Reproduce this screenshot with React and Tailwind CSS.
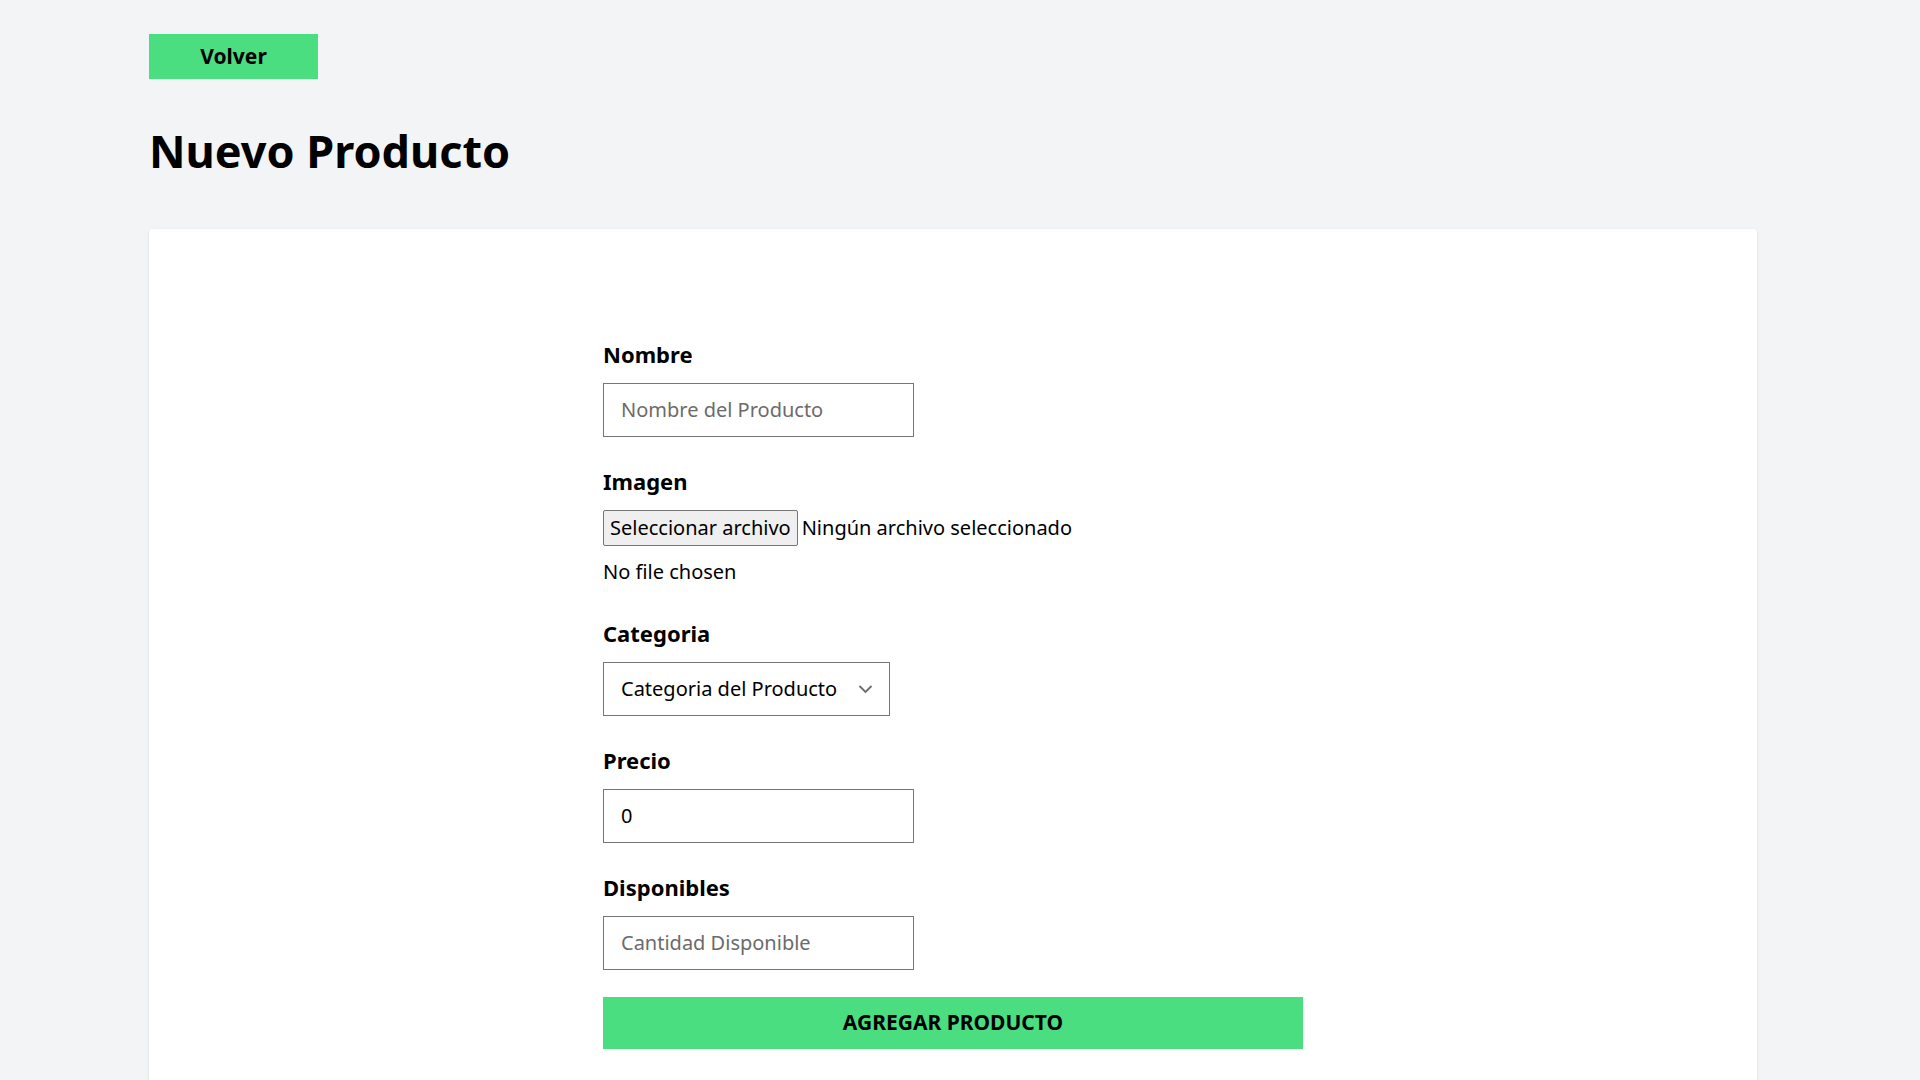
import React, { useState } from 'react';

const Field = ({ label, className = 'mb-[29px]', children }) => (
  <div className={className}>
    <label className="block text-[22px] font-bold leading-[30px] mb-[14px]">{label}</label>
    {children}
  </div>
);

const NuevoProducto = () => {
  const [nombre, setNombre] = useState('');
  const [categoria, setCategoria] = useState('');
  const [precio, setPrecio] = useState(0);
  const [disponibles, setDisponibles] = useState('');

  const inputClass = "w-[311px] h-[54px] border border-[#767676] bg-white px-[17px] text-[20px] text-black placeholder:text-[#6b6b6b] outline-none";

  return (
    <div className="h-screen overflow-y-scroll bg-[#f3f4f6] text-black font-['Noto_Sans',_'Open_Sans',_sans-serif]">
      <div className="w-[1608px] ml-[149px] pt-[34px] pb-[100px]">
        <button className="w-[169px] h-[45px] bg-[#4ade80] text-[21px] font-bold">Volver</button>

        <h1 className="mt-[41.5px] text-[45px] font-bold leading-[60px]">Nuevo Producto</h1>

        <div className="mt-[48.5px] bg-white rounded-sm shadow-sm pt-[109.5px] pb-[90px]">
          <form className="w-[700px] mx-auto" onSubmit={(e) => e.preventDefault()}>
            <Field label="Nombre">
              <input
                type="text"
                value={nombre}
                onChange={(e) => setNombre(e.target.value)}
                placeholder="Nombre del Producto"
                className={inputClass}
              />
            </Field>

            <Field label="Imagen" className="mb-[32px]">
              <label className="flex items-center text-[20px] leading-[28px] cursor-pointer mt-[1.5px]">
                <span className="h-[36px] px-[6px] flex items-center bg-[#efefef] border border-[#767676] rounded-[2px]">Seleccionar archivo</span>
                <span className="ml-[4px]">Ningún archivo seleccionado</span>
                <input type="file" className="hidden" />
              </label>
              <p className="mt-[12px] text-[20px] leading-[28px]">No file chosen</p>
            </Field>

            <Field label="Categoria">
              <div className="relative w-[287px]">
                <select
                  value={categoria}
                  onChange={(e) => setCategoria(e.target.value)}
                  className="appearance-none w-full h-[54px] border border-[#767676] bg-white pl-[17px] pr-[40px] text-[20px] text-black outline-none"
                >
                  <option value="">Categoria del Producto</option>
                  <option value="1">Comida</option>
                  <option value="2">Bebida</option>
                </select>
                <svg className="absolute right-[17px] top-[22px] w-[15px] h-[10px] pointer-events-none" viewBox="0 0 15 10" fill="none">
                  <path d="M1.5 2l6 6 6-6" stroke="#6b6b6b" strokeWidth="1.8" />
                </svg>
              </div>
            </Field>

            <Field label="Precio">
              <input
                type="number"
                value={precio}
                onChange={(e) => setPrecio(e.target.value)}
                className={inputClass}
              />
            </Field>

            <Field label="Disponibles" className="mb-[27px]">
              <input
                type="number"
                value={disponibles}
                onChange={(e) => setDisponibles(e.target.value)}
                placeholder="Cantidad Disponible"
                className={inputClass}
              />
            </Field>

            <button type="submit" className="w-full h-[52px] bg-[#4ade80] text-[21px] font-bold uppercase">
              Agregar Producto
            </button>
          </form>
        </div>
      </div>
    </div>
  );
};

export default function App() {
  return <NuevoProducto />;
}
